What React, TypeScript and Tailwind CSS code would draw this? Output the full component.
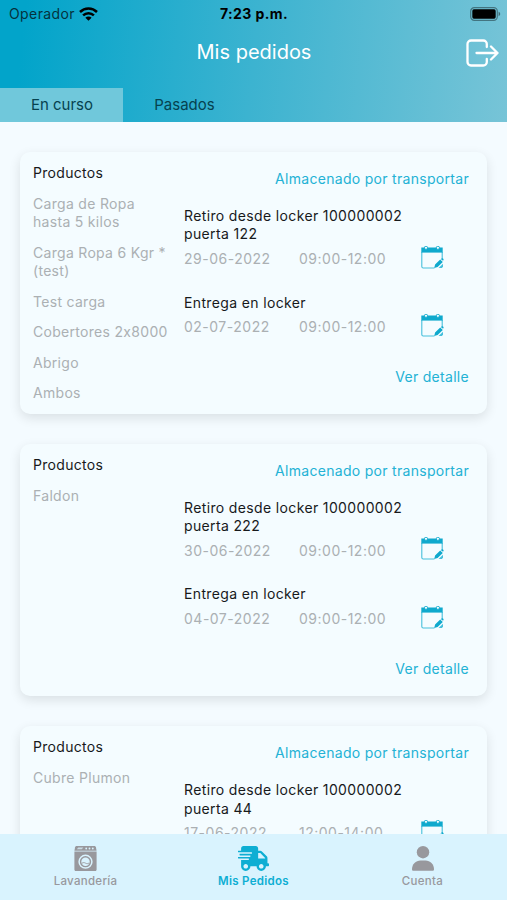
import { useState } from 'react';
import { FaShippingFast } from 'react-icons/fa';

interface Step {
  title: string;
  date: string;
  hours: string;
}

interface Order {
  id: number;
  status: string;
  products: string[];
  steps: Step[];
}

const orders: Order[] = [
  {
    id: 1,
    status: 'Almacenado por transportar',
    products: ['Carga de Ropa hasta 5 kilos', 'Carga Ropa 6 Kgr * (test)', 'Test carga', 'Cobertores 2x8000', 'Abrigo', 'Ambos'],
    steps: [
      { title: 'Retiro desde locker 100000002 puerta 122', date: '29-06-2022', hours: '09:00-12:00' },
      { title: 'Entrega en locker', date: '02-07-2022', hours: '09:00-12:00' },
    ],
  },
  {
    id: 2,
    status: 'Almacenado por transportar',
    products: ['Faldon'],
    steps: [
      { title: 'Retiro desde locker 100000002 puerta 222', date: '30-06-2022', hours: '09:00-12:00' },
      { title: 'Entrega en locker', date: '04-07-2022', hours: '09:00-12:00' },
    ],
  },
  {
    id: 3,
    status: 'Almacenado por transportar',
    products: ['Cubre Plumon'],
    steps: [{ title: 'Retiro desde locker 100000002 puerta 44', date: '17-06-2022', hours: '12:00-14:00' }],
  },
];

function WifiIcon() {
  return (
    <svg width="19" height="14" viewBox="0 0 19 14" fill="none" stroke="#000" strokeWidth="2.5">
      <path d="M1 5a12.200 12.200 0 0 1 17 0" />
      <path d="M4.100 8.400a7.800 7.800 0 0 1 10.800 0" />
      <path d="M9.500 13.800 6.400 10.700a4.400 4.400 0 0 1 6.200 0z" fill="#000" stroke="none" />
    </svg>
  );
}

function BatteryIcon() {
  return (
    <svg width="31" height="14" viewBox="0 0 31 14">
      <rect x="0.7" y="0.7" width="26.6" height="12.6" rx="3.6" fill="none" stroke="#000" strokeOpacity="0.4" strokeWidth="1.2" />
      <rect x="2.3" y="2.3" width="23.4" height="9.4" rx="1.6" fill="#000" />
      <path d="M28.600 4.800v4.400c1-.4 1.600-1.200 1.600-2.200s-.6-1.800-1.600-2.200z" fill="#000" fillOpacity="0.45" />
    </svg>
  );
}

function LogoutIcon() {
  return (
    <svg width="33" height="28" viewBox="0 0 33 28" fill="none" stroke="#fff" strokeWidth="2.3" strokeLinecap="round" strokeLinejoin="round">
      <path d="M20.800 8V5a3.500 3.500 0 0 0-3.500-3.500H5A3.500 3.500 0 0 0 1.500 5v18A3.500 3.500 0 0 0 5 26.500h12.300a3.500 3.500 0 0 0 3.500-3.500v-3" />
      <path d="M10.500 14h21M25 7.500l6.500 6.500-6.500 6.500" />
    </svg>
  );
}

function CalendarIcon() {
  return (
    <svg width="23" height="23" viewBox="0 0 23 23" className="shrink-0">
      <path d="M.8 6v14.500c0 .9.5 1.500 1.400 1.500h11.300M21.200 6v8" fill="none" stroke="#45bfdc" strokeWidth="1.1" />
      <path d="M.3 1.500h21.400v5.100H.3z" fill="#0fa9cd" />
      <circle cx="5" cy="1.800" r="1.600" fill="#f4fcff" stroke="#0fa9cd" strokeWidth="0.9" />
      <circle cx="16.900" cy="1.800" r="1.600" fill="#f4fcff" stroke="#0fa9cd" strokeWidth="0.9" />
      <path d="m13.200 22 .9-3.500 5.100-4.900 2.600 2.500-5.200 5zM20 13l.7-.6c1-.6 2.300.7 1.800 1.700l-.5.700z" fill="#0fa9cd" />
      <path d="M17.500 22h3.400l1.100-1.300v-2.900z" fill="#45bfdc" />
    </svg>
  );
}

function WasherIcon() {
  return (
    <svg width="23" height="25" viewBox="0 0 23 25">
      <path d="M2.800 0h17.400c1 0 1.600.5 1.800 1.500l.6 3.300H.4L1 1.500C1.200.5 1.800 0 2.800 0z" fill="#98989d" />
      <path d="M.4 5.600h22.200v17.900c0 .8-.5 1.500-1.300 1.500H1.700C.9 25 .4 24.300.4 23.500z" fill="#98989d" />
      <path d="M2.800 3.300 4.300 1.500h5L7.800 3.300z" fill="#d9f3fe" fillOpacity="0.75" />
      <circle cx="12.200" cy="2.500" r="0.9" fill="#d9f3fe" />
      <circle cx="15.500" cy="2.500" r="0.9" fill="#d9f3fe" />
      <circle cx="18.800" cy="2.500" r="0.9" fill="#d9f3fe" />
      <circle cx="11.500" cy="15.700" r="6.400" fill="none" stroke="#d9f3fe" strokeWidth="1.500" />
      <circle cx="11.500" cy="15.700" r="4.200" fill="#d9f3fe" />
      <path d="M8 17.200c1.300-.9 2.400-.7 3.600 0 1.200.6 2.300.6 3.400-.2" fill="none" stroke="#98989d" strokeWidth="0.9" />
    </svg>
  );
}

function PersonIcon() {
  return (
    <svg width="22" height="25" viewBox="0 0 22 25" fill="#98989d">
      <circle cx="11" cy="6.200" r="6.200" />
      <path d="M0 23.300C0 18 3.800 14.500 8.500 14.500h5c4.700 0 8.500 3.500 8.500 8.800 0 1-.6 1.500-1.500 1.500h-19C.6 24.800 0 24.300 0 23.300z" />
    </svg>
  );
}

function OrderCard({ order }: { order: Order }) {
  return (
    <article className="flex min-h-[252.500px] shrink-0 rounded-[10px] bg-[#f4fcff] pr-[18px] pl-[13px] shadow-[0_4px_12px_rgba(0,0,0,0.11)]">
      <div className="w-[151px] shrink-0 pt-3 pb-[11px]">
        <h2 className="text-[#17191b]">Productos</h2>
        <ul className="mt-[12.600px] flex flex-col gap-[12.100px] text-[#abb0b3]">
          {order.products.map((product) => (
            <li key={product} className="max-w-[140px]">{product}</li>
          ))}
        </ul>
      </div>
      <div className="flex min-w-0 flex-1 flex-col pt-[18px]">
        <p className="text-right text-[#23b2d5]">{order.status}</p>
        <div className="mt-[18.600px] flex flex-col gap-[25.500px]">
          {order.steps.map((step) => (
            <section key={step.title}>
              <h3 className="w-[235px] tracking-[0.360px] text-[#17191b]">{step.title}</h3>
              <div className="mt-1.5 flex h-[18.400px] items-center text-[#abb0b3]">
                <span className="w-[115px] tracking-[0.500px]">{step.date}</span>
                <span className="w-[122px] tracking-[0.500px]">{step.hours}</span>
                <button type="button" className="-mt-1" aria-label="Editar fecha">
                  <CalendarIcon />
                </button>
              </div>
            </section>
          ))}
        </div>
        <button type="button" className="mt-[31.400px] self-end text-[#23b2d5]">Ver detalle</button>
      </div>
    </article>
  );
}

export default function App() {
  const [tab, setTab] = useState<'current' | 'past'>('current');

  return (
    <div className="flex h-[900px] w-[507px] flex-col overflow-hidden bg-[#f4fbff] font-['Inter',sans-serif] text-[14px] leading-[18.400px] tracking-[0.300px]">
      <header className="flex h-[122px] shrink-0 flex-col bg-linear-[96deg,#02a4ca_5%,#3cb3d0_50%,#77c4d7]">
        <div className="grid h-7 grid-cols-[1fr_auto_1fr] items-center pr-[6px] pl-[9px] text-[14px] tracking-[0.400px]">
          <div className="flex items-center gap-1 text-[#05323d]">
            Operador
            <WifiIcon />
          </div>
          <span className="pr-0.5 font-bold text-black">7:23 p.m.</span>
          <div className="flex justify-end pb-px">
            <BatteryIcon />
          </div>
        </div>
        <div className="grid h-[60px] grid-cols-[1fr_auto_1fr] items-center pr-2 pb-[11px] pl-[9px]">
          <span />
          <h1 className="text-[20px] tracking-normal text-white">Mis pedidos</h1>
          <button type="button" className="justify-self-end" aria-label="Salir">
            <LogoutIcon />
          </button>
        </div>
        <nav className="flex h-[34px] text-[15px] tracking-normal text-[#06424f]">
          <button
            type="button"
            onClick={() => setTab('current')}
            className={`w-[123px] pl-px ${tab === 'current' ? 'bg-[#70c8db]' : ''}`}
          >
            En curso
          </button>
          <button
            type="button"
            onClick={() => setTab('past')}
            className={`w-[123px] ${tab === 'past' ? 'bg-[#70c8db]' : ''}`}
          >
            Pasados
          </button>
        </nav>
      </header>

      <main className="flex min-h-0 flex-1 flex-col gap-[30px] overflow-hidden px-5 pt-[30px]">
        {orders.map((order) => (
          <OrderCard key={order.id} order={order} />
        ))}
      </main>

      <footer className="grid h-[66px] shrink-0 grid-cols-3 bg-[#d9f3fe] pt-3 text-[11.500px] leading-[14px] font-medium text-[#98989d]">
        <button type="button" className="flex flex-col items-center justify-start gap-[3px] pl-0.5">
          <WasherIcon />
          Lavandería
        </button>
        <button type="button" className="flex flex-col items-center justify-start gap-[3px] font-semibold text-[#0eaed3]">
          <FaShippingFast className="h-[25px] w-[31px]" />
          Mis Pedidos
        </button>
        <button type="button" className="flex flex-col items-center justify-start gap-[3px]">
          <PersonIcon />
          Cuenta
        </button>
      </footer>
    </div>
  );
}
